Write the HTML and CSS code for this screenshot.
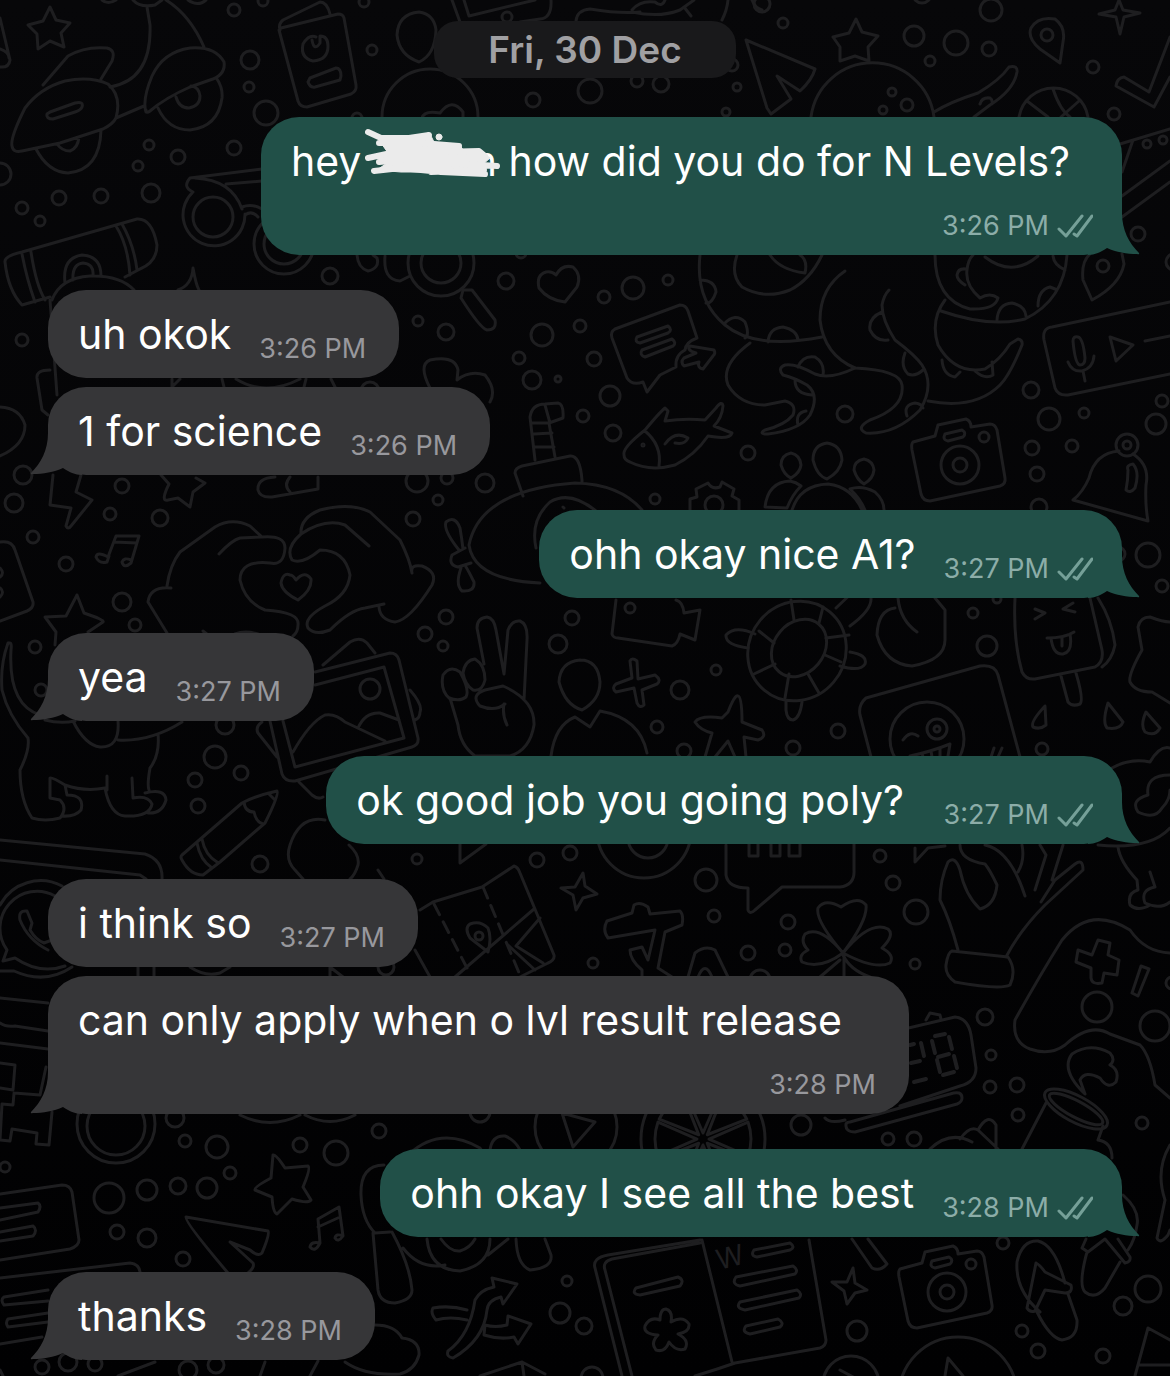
FILE: index.html
```html
<!DOCTYPE html>
<html lang="en">
<head>
<meta charset="utf-8">
<meta name="viewport" content="width=device-width, initial-scale=1">
<title>Chat</title>
<link rel="stylesheet" href="styles.css">
</head>
<body>
<svg class="wallpaper" viewBox="0 0 1170 1376" preserveAspectRatio="xMidYMin slice" aria-hidden="true">
  <defs>
    <g id="camera"><path d="M913 442L935 436L938 425L966 419Q971 421 971 427L990 424Q995 424 997 430L1005 478Q1006 484 1000 486L930 501Q923 501 921 494L912 450Q911 444 913 442ZM945 434L962 430Q967 433 963 437L948 441Q942 440 945 434Z"/><circle cx="960" cy="465" r="19"/><circle cx="960" cy="465" r="7"/><circle cx="984" cy="437" r="5"/></g>
    <path id="wedge" d="M709 1139L748 1122Q754 1139 748 1156Z"/>
  </defs>
  <!-- bubbles scattered between the doodles -->
  <g>
    <circle cx="234" cy="10" r="6"/><circle cx="263" cy="1" r="5"/><circle cx="250" cy="60" r="9"/><circle cx="249" cy="87" r="5"/><circle cx="266" cy="113" r="12"/><circle cx="149" cy="145" r="5"/><circle cx="178" cy="157" r="7"/><circle cx="138" cy="166" r="5"/><circle cx="234" cy="148" r="7"/><circle cx="59" cy="198" r="7"/><circle cx="101" cy="196" r="7"/><circle cx="151" cy="193" r="9"/><circle cx="22" cy="208" r="6"/><circle cx="40" cy="221" r="5"/><circle cx="0" cy="174" r="11"/><circle cx="372" cy="50" r="5"/><circle cx="364" cy="2" r="5"/><circle cx="330" cy="276" r="8"/><circle cx="357" cy="118" r="5"/>
    <circle cx="507" cy="17" r="5"/><circle cx="533" cy="100" r="7"/><circle cx="590" cy="91" r="12"/><circle cx="637" cy="81" r="6"/><circle cx="661" cy="84" r="8"/><circle cx="737" cy="87" r="4"/><circle cx="726" cy="112" r="4"/><circle cx="732" cy="65" r="6"/><circle cx="506" cy="281" r="8"/><circle cx="633" cy="288" r="11"/><circle cx="668" cy="280" r="5"/><circle cx="604" cy="297" r="6"/><circle cx="521" cy="253" r="5"/>
    <circle cx="762" cy="4" r="8"/><circle cx="783" cy="23" r="5"/><circle cx="922" cy="-6" r="9"/><circle cx="991" cy="10" r="11"/><circle cx="914" cy="36" r="10"/><circle cx="930" cy="61" r="5"/><circle cx="956" cy="43" r="12"/><circle cx="989" cy="49" r="7"/><circle cx="1047" cy="35" r="6"/><circle cx="1093" cy="67" r="6"/><circle cx="1114" cy="114" r="6"/><circle cx="892" cy="92" r="4"/><circle cx="907" cy="105" r="6"/><circle cx="883" cy="110" r="4"/><circle cx="1147" cy="144" r="4"/><circle cx="1163" cy="140" r="4"/><circle cx="1138" cy="234" r="7"/><circle cx="1103" cy="266" r="6"/><circle cx="1174" cy="262" r="8"/>
    <circle cx="1031" cy="390" r="8"/><circle cx="1049" cy="419" r="11"/><circle cx="1084" cy="413" r="5"/><circle cx="1162" cy="401" r="6"/><circle cx="1156" cy="424" r="10"/><circle cx="1032" cy="448" r="7"/><circle cx="1072" cy="446" r="6"/><circle cx="1037" cy="474" r="7"/><circle cx="1039" cy="507" r="8"/><circle cx="1127" cy="445" r="11"/><circle cx="1127" cy="445" r="4"/><circle cx="1148" cy="555" r="12"/><circle cx="1162" cy="586" r="6"/><circle cx="845" cy="414" r="8"/><circle cx="1118" cy="554" r="7"/>
    <circle cx="542" cy="335" r="11"/><circle cx="580" cy="326" r="6"/><circle cx="519" cy="358" r="6"/><circle cx="594" cy="359" r="7"/><circle cx="532" cy="380" r="9"/><circle cx="558" cy="379" r="3"/><circle cx="610" cy="396" r="10"/><circle cx="583" cy="416" r="6"/><circle cx="613" cy="433" r="8"/><circle cx="748" cy="453" r="7"/><circle cx="655" cy="499" r="5"/><circle cx="485" cy="483" r="9"/><circle cx="643" cy="445" r="1"/>
    <circle cx="22" cy="340" r="6"/><circle cx="418" cy="321" r="5"/><circle cx="446" cy="332" r="8"/><circle cx="23" cy="475" r="9"/><circle cx="14" cy="503" r="9"/><circle cx="122" cy="486" r="7"/><circle cx="110" cy="514" r="6"/><circle cx="33" cy="537" r="6"/><circle cx="160" cy="518" r="8"/><circle cx="66" cy="564" r="7"/><circle cx="122" cy="602" r="9"/><circle cx="135" cy="625" r="6"/><circle cx="417" cy="481" r="11"/><circle cx="447" cy="478" r="6"/><circle cx="438" cy="500" r="5"/><circle cx="413" cy="519" r="7"/><circle cx="446" cy="617" r="7"/><circle cx="425" cy="634" r="7"/><circle cx="443" cy="646" r="5"/><circle cx="35" cy="647" r="6"/><circle cx="41" cy="690" r="6"/><circle cx="370" cy="391" r="9"/><circle cx="225" cy="725" r="9"/><circle cx="215" cy="757" r="11"/><circle cx="241" cy="773" r="7"/><circle cx="195" cy="780" r="7"/><circle cx="198" cy="806" r="7"/><circle cx="260" cy="864" r="8"/>
    <circle cx="572" cy="618" r="7"/><circle cx="558" cy="644" r="9"/><circle cx="630" cy="608" r="5"/><circle cx="716" cy="670" r="5"/><circle cx="680" cy="690" r="9"/><circle cx="657" cy="727" r="6"/><circle cx="684" cy="751" r="7"/><circle cx="793" cy="748" r="7"/><circle cx="838" cy="731" r="7"/><circle cx="987" cy="646" r="10"/><circle cx="973" cy="613" r="5"/><circle cx="997" cy="599" r="4"/><circle cx="1042" cy="749" r="6"/>
    <circle cx="417" cy="859" r="5"/><circle cx="537" cy="860" r="7"/><circle cx="570" cy="853" r="7"/><circle cx="706" cy="880" r="11"/><circle cx="880" cy="856" r="6"/><circle cx="893" cy="883" r="7"/><circle cx="714" cy="916" r="6"/><circle cx="788" cy="922" r="7"/><circle cx="748" cy="953" r="7"/><circle cx="785" cy="950" r="6"/><circle cx="916" cy="912" r="12"/><circle cx="915" cy="964" r="5"/><circle cx="593" cy="963" r="5"/><circle cx="760" cy="980" r="10"/><circle cx="386" cy="967" r="8"/>
    <circle cx="175" cy="1118" r="9"/><circle cx="185" cy="1141" r="6"/><circle cx="217" cy="1147" r="11"/><circle cx="300" cy="1145" r="7"/><circle cx="336" cy="1153" r="12"/><circle cx="379" cy="1131" r="7"/><circle cx="230" cy="1173" r="6"/><circle cx="109" cy="1198" r="15"/><circle cx="147" cy="1190" r="10"/><circle cx="178" cy="1186" r="8"/><circle cx="207" cy="1188" r="10"/><circle cx="117" cy="1232" r="7"/><circle cx="147" cy="1238" r="9"/><circle cx="183" cy="1259" r="7"/><circle cx="5" cy="1167" r="5"/><circle cx="42" cy="1367" r="7"/><circle cx="68" cy="1362" r="9"/><circle cx="95" cy="1364" r="7"/><circle cx="188" cy="1370" r="9"/><circle cx="216" cy="1365" r="8"/><circle cx="480" cy="1112" r="10"/><circle cx="567" cy="1281" r="5"/><circle cx="560" cy="1313" r="10"/><circle cx="584" cy="1326" r="8"/>
    <circle cx="801" cy="1125" r="10"/><circle cx="888" cy="1139" r="6"/><circle cx="914" cy="1139" r="7"/><circle cx="985" cy="1017" r="8"/><circle cx="991" cy="1055" r="5"/><circle cx="990" cy="1087" r="6"/><circle cx="1017" cy="1085" r="7"/><circle cx="1018" cy="1115" r="6"/><circle cx="1142" cy="1123" r="6"/><circle cx="1097" cy="1007" r="15"/><circle cx="1155" cy="1026" r="15"/><circle cx="1172" cy="983" r="6"/><circle cx="1003" cy="1243" r="6"/><circle cx="857" cy="1331" r="10"/><circle cx="1022" cy="1331" r="6"/><circle cx="1038" cy="1351" r="7"/><circle cx="1123" cy="1306" r="9"/><circle cx="1148" cy="1289" r="13"/><circle cx="1103" cy="1356" r="7"/><circle cx="958" cy="1396" r="59"/><circle cx="851" cy="1384" r="28"/><circle cx="592" cy="1378" r="11"/>
  </g>
  <!-- top band: star, scooter, passport, sunglasses, torch -->
  <path d="M50 7L56 20L70 23L61 33L64 47L50 41L38 49L37 34L28 25L43 21ZM0 18L10 60Q9 68 0 67M0 49Q9 52 9 58"/>
  <path d="M43 85L68 56Q85 46 107 48Q116 50 112 61L101 79M12 146Q10 138 25 108Q40 88 65 81Q90 76 108 84Q122 96 116 118Q113 124 103 129L60 143L22 151Q13 153 12 146M50 112L75 103Q84 101 82 107Q81 110 75 112L53 119Q46 119 47 114ZM36 149Q48 172 68 173Q100 170 101 130M57 144Q62 151 70 151Q78 148 79 137M146 112Q142 100 152 76Q163 52 190 48Q215 46 224 62Q226 75 210 80L190 87Q165 98 150 111Q146 114 146 110M158 108Q168 130 190 130Q218 127 222 98Q223 88 217 79M176 97Q179 108 189 108Q200 106 200 96Q199 87 191 86M116 118L144 106M110 87Q152 80 150 25L147 7M166 0Q190 15 204 47M133 0Q140 8 155 5L162 0M102 0Q108 5 116 0M188 0Q198 7 206 0"/>
  <path d="M280 30Q278 24 283 20L320 2Q327 2 330 14M281 28L338 14Q343 14 344 18L356 85Q357 91 351 94L307 107Q300 107 298 101L279 30M316 37Q309 34 303 44Q300 58 313 61Q328 60 328 46Q328 36 320 36L320 43Q314 52 312 40M310 78L336 68Q341 68 341 76L340 80L315 87Q310 88 308 82Z"/>
  <circle cx="213" cy="217" r="20"/><circle cx="284" cy="244" r="30"/><circle cx="284" cy="244" r="20"/>
  <path d="M193 192Q182 187 190 178L262 169M195 178Q232 180 242 209M226 184L262 181M193 192A31 31 0 1 0 245 214M242 207Q252 203 262 209M245 215Q252 210 258 217"/>
  <path d="M5 262Q4 256 22 252L137 219Q152 218 157 245Q157 262 140 269L125 277M5 262Q8 290 22 305L50 297M22 254Q27 280 35 302M31 252Q36 285 45 300M116 226Q128 245 130 275M122 224Q134 245 137 270M65 283Q62 258 82 255Q101 256 101 276M73 280Q72 264 83 263Q94 264 93 275M52 300Q60 278 90 276Q120 275 134 290M178 290Q192 285 193 268Q196 285 199 290"/>
  <path d="M357 255Q358 268 368 271Q380 268 377 258L373 255M385 256Q383 280 400 281L410 276M463 290L472 290L495 320Q497 330 487 330Q480 328 461 298Z"/>
  <circle cx="441" cy="263" r="33"/><circle cx="441" cy="263" r="20"/>
  <path d="M419 12Q398 14 397 35Q399 55 419 62Q435 55 436 30Q434 14 419 12ZM382 117A48 48 0 0 1 478 117M422 118Q424 110 440 113Q452 97 463 112V120M452 0L460 22M464 0L469 16L535 0M551 0Q552 18 540 19L520 22M576 21Q577 10 590 9Q620 14 640 12M632 10Q640 0 655 2Q662 8 665 0M632 12Q660 18 680 10L694 0M684 7L691 16M728 0Q727 10 722 20M752 0Q755 8 762 10"/>
  <path d="M556 275Q562 264 573 267Q582 275 577 287L565 302Q548 300 539 288Q536 275 546 272Q552 271 556 275Z"/>
  <path d="M856 19L862 32L878 36L868 47L869 61L855 56L840 61L840 47L833 37L849 33ZM1060 63L1040 49Q1027 38 1031 28Q1038 16 1055 19Q1066 27 1063 42ZM1119 0L1123 10L1140 13L1124 17L1120 34L1116 17L1099 14L1115 10ZM1170 37L1149 92L1124 77Q1117 78 1116 86L1154 107L1170 77M746 40L815 69Q812 80 800 91L777 76L791 99L771 114L767 108Z"/>
  <path d="M811 117A62 62 0 0 1 934 117M934 112Q950 102 978 93Q1000 80 1009 67Q1018 65 1017 72Q1014 90 990 105L974 117M980 104Q982 97 990 98Q993 100 992 104M1019 117A35 35 0 0 1 1088 117M1027 101L1048 117M1053 89Q1060 110 1070 117M1079 101L1061 117M1120 144L1170 129M1122 196L1170 161M1122 217L1170 182M1133 140L1122 172"/>
  <!-- dinosaurs, voice note, camera, bell -->
  <path d="M1090 254Q1081 262 1083 280L1092 300Q1120 285 1124 264L1122 254M845 271Q820 288 820 320Q824 355 855 368Q900 370 902 385Q905 408 870 420Q855 428 866 433Q895 435 920 410Q935 385 922 365Q915 355 895 340Q882 320 882 305Q884 295 889 290M882 312Q868 318 870 330Q876 342 888 340M905 353Q900 366 908 374Q915 377 923 370M907 416Q903 405 915 403Q922 404 923 408M935 255Q935 300 970 309Q995 310 998 298Q990 292 980 298Q965 285 967 270Q968 260 973 255M965 285Q957 280 957 275Q958 268 966 269M985 257Q1012 278 1038 256M1067 255Q1064 300 1025 319Q990 328 941 311M997 320Q998 304 1012 303Q1025 306 1026 316M1038 306Q1038 290 1050 287L1055 289M1053 256Q1054 265 1065 270M945 300Q930 320 938 345Q955 375 985 369Q1000 360 1010 344L1018 339Q1023 340 1022 345Q1010 375 1000 385Q975 410 928 401M942 360Q943 375 955 377L960 372M975 371Q985 380 993 375L992 362"/>
  <path d="M1170 302L1052 327Q1042 328 1044 340L1055 388Q1058 396 1068 395L1170 374M1073 341Q1073 336 1078 337Q1083 338 1085 358Q1085 365 1080 365Q1075 364 1073 341M1068 362Q1072 372 1082 371Q1093 368 1094 356M1083 371L1085 381M1110 337L1133 345L1116 361ZM1145 341L1170 336M1119 451Q1095 453 1089 478Q1083 492 1073 500L1148 521Q1145 505 1146 485Q1150 465 1133 454M1128 470Q1126 465 1133 464Q1140 472 1135 488Q1130 494 1126 490Q1128 480 1128 470"/>
  <use href="#camera"/>
  <path d="M827 443Q813 445 813 460Q817 476 827 479Q840 472 842 460Q841 445 827 443ZM791 453Q781 455 781 465Q784 475 791 478Q800 473 801 465Q800 455 791 453ZM864 459Q854 461 854 470Q857 480 864 484Q873 479 874 470Q873 461 864 459ZM792 510Q800 485 828 484Q852 487 862 510M765 507Q768 482 790 481Q796 482 801 486Q792 495 787 508ZM850 489Q862 485 875 492Q884 500 884 510M850 489Q860 498 865 510"/>
  <path d="M615 329L680 305Q686 305 688 311L697 338Q686 342 685 350Q675 355 676 367L660 375L647 392L643 382Q632 386 627 378L612 338Q610 332 615 329ZM637 337L668 326Q673 330 668 333L640 343Q634 342 637 337ZM642 350L672 339Q677 343 673 346L645 357Q639 355 642 350ZM690 346L714 350Q716 353 713 356L703 369Q697 368 699 362L684 366Q680 362 684 358L696 353Q686 350 690 346Z"/>
  <path d="M624 455Q622 448 645 430Q660 412 665 408L668 411L665 421Q685 418 705 420L716 408Q722 400 723 406Q722 418 714 426L732 433Q730 440 708 436Q695 455 675 465Q650 472 630 462Q624 460 624 455M645 431Q662 445 659 466M665 444Q675 430 688 438Q685 445 675 443"/>
  <path d="M535 460L530 417Q532 404 545 404L558 403Q564 404 563 418L549 423L555 457M545 405L550 423L532 423M534 434L552 433M535 447L554 447M523 496L515 473Q515 468 522 466L570 456Q580 455 582 480V483M642 510Q620 484 575 483Q480 490 469 545Q474 580 540 583M596 511Q570 490 550 502Q530 520 536 548M465 548L452 555Q448 565 458 567L471 563M459 550Q443 530 446 522Q455 515 460 528Q462 540 463 549M461 568Q455 585 462 591Q475 592 474 582Q468 570 466 567M563 507L564 508M690 510V499L697 497L696 489L708 483Q712 490 720 487L722 482L734 489L732 496L739 500V510"/>
  <circle cx="714" cy="505" r="9"/>
  <path d="M700 255Q695 300 725 325Q755 350 822 337M737 255Q730 275 742 287Q765 300 790 290Q810 280 822 255M770 255Q780 270 805 273Q808 260 800 255M700 280Q715 280 716 292Q712 304 706 303M724 324Q735 312 745 322Q750 335 745 338M768 342Q769 328 783 327Q797 330 798 340M750 343Q720 365 728 385Q740 405 765 405L785 401Q797 404 793 415Q785 425 765 430Q758 434 768 434Q800 430 810 415Q820 395 807 385Q795 378 783 375Q777 368 785 365Q795 363 815 374Q830 380 855 368M798 367Q803 355 815 357Q825 363 823 375M795 380Q795 394 812 395M798 425Q795 413 806 411"/>
  <path d="M430 388Q418 365 430 360Q455 355 458 370L457 380Q470 370 485 375Q497 390 490 402M172 379V387L180 379M222 379L224 387M236 379Q265 397 300 379M306 379L304 387M331 379L335 387"/>
  <!-- lightning, heart hands, music, dog, photo, pencil -->
  <path d="M53 475L50 505L71 508L66 526Q68 530 71 526L92 500L76 492L81 475M161 475L169 484Q160 502 168 500L178 498L190 507L193 492L205 483L196 478M275 477Q257 478 258 490Q260 498 272 497L318 489V477M290 477Q283 485 290 492M131 560Q124 557 122 562Q124 569 131 563L139 536H116L108 557Q97 551 96 557Q99 564 107 562L109 556M114 542L137 543"/>
  <path d="M167 586Q170 565 180 552L215 527Q232 517 250 526L262 537Q285 535 285 548Q284 566 270 563Q240 560 240 580Q245 602 265 610Q300 612 298 625Q298 632 293 636M262 537L240 538Q232 540 219 554M171 588Q150 586 148 602L167 633M203 631L208 635M235 634Q245 630 258 634M301 534Q300 518 320 510Q350 502 370 512L400 540Q410 560 412 573M301 534Q285 548 292 560Q302 565 320 550Q345 550 350 575Q348 595 325 606Q303 618 308 628Q315 636 330 630Q350 610 365 608L384 604M301 534Q325 518 345 525L369 546M412 573Q410 564 422 566Q438 572 432 585Q410 620 395 622Q380 620 379 607M296 580Q305 570 311 579Q312 590 298 600Q282 592 281 583Q283 572 290 575Q293 575 296 580Z"/>
  <path d="M0 542Q12 540 15 550L33 602Q34 608 27 611L0 621M0 568Q5 573 0 577M0 588Q5 592 0 597M77 595L84 613Q105 620 103 622L88 632M77 595L66 616L45 617L56 632L55 645M0 407Q20 408 25 425Q25 445 0 456M50 370Q36 370 37 378L42 410L48 415M50 300L57 395"/>
  <path d="M8 643Q0 665 2 690Q8 715 28 738Q30 750 20 770Q20 800 32 818Q45 822 60 818Q68 808 60 800L50 798V778Q52 777 65 785L67 795Q85 795 81 810Q75 817 62 816M9 643Q12 642 11 650Q8 705 40 715M65 785Q85 792 105 788Q110 815 125 816Q150 817 152 804Q148 795 133 798L132 778M145 793Q165 788 166 800Q162 814 148 813M158 734Q160 755 150 768Q147 785 149 790M107 776V790M73 721Q85 745 100 747Q120 748 118 721M118 740Q150 742 182 722M45 720Q60 724 75 721"/>
  <path d="M315 672L390 653Q397 653 399 660L418 738Q419 745 412 747L295 781Q285 782 282 774L270 721M315 685L384 667L404 738L295 767L283 721M293 752Q310 722 325 715Q335 713 345 722L385 741M358 728Q365 712 380 713L399 720M323 665L350 642Q360 636 367 643L375 653M410 690Q423 705 420 712Q420 718 415 720M262 722Q255 727 258 733L277 757M299 782L312 795Q318 800 323 797M182 855L242 803Q255 796 277 791Q280 793 265 823L220 862L203 875Q190 875 182 860Q180 857 182 855M244 802Q245 812 254 812Q256 822 263 824M268 793L274 799M202 839Q205 855 217 862M197 843Q200 860 212 868M325 820Q300 815 290 845Q285 860 295 870L303 879M349 845Q360 855 358 865Q355 875 350 879M378 870L384 879"/>
  <circle cx="370" cy="689" r="10"/>
  <!-- peace hand, video, turtle, dice, ice lolly -->
  <path d="M484 664L477 628Q477 618 487 617Q494 618 496 630L504 674L508 630Q512 620 520 621Q528 624 527 640L524 700M449 698Q440 690 443 675Q450 665 460 672Q470 690 466 697Q460 702 449 698M463 673Q465 660 475 659Q485 665 485 680Q482 692 473 690Q465 685 463 673M505 704Q495 712 480 706Q470 695 485 690L503 686Q535 700 534 725Q530 750 510 756H475Q460 745 458 725L450 698M504 704Q502 715 507 725M580 660Q560 662 559 682Q565 705 582 710Q600 700 600 682Q598 660 580 660M551 756Q555 725 575 717L590 727L600 711Q640 718 647 753M630 661Q632 657 637 661L638 679L655 675Q662 680 657 684L642 690L644 705Q640 709 637 703L634 688L616 692Q611 688 616 684L632 678ZM616 600L612 634Q613 638 618 638L672 646Q678 644 680 634L695 640L700 610L684 613Q683 602 676 600M705 757L712 733Q700 730 695 722Q700 715 722 718L728 712Q735 694 738 696Q742 696 742 722L762 730Q767 737 758 740L744 737L746 757M715 757L728 741L735 757"/>
  <ellipse cx="797" cy="651" rx="48" ry="51" transform="rotate(40 797 651)"/><ellipse cx="799" cy="648" rx="25" ry="31" transform="rotate(40 799 648)"/>
  <path d="M791 600L794 620M823 607L819 623M849 635L826 638M825 655L841 662M808 674L819 693M789 674L785 698M775 664L754 674M759 631L774 643M755 634Q735 625 726 635Q725 645 748 648M850 652Q868 655 865 664Q860 672 840 666M786 702V710Q787 720 793 720Q800 718 802 702M836 608L855 590M850 626Q872 610 871 598M895 608Q878 610 877 635Q885 664 912 666Q945 660 945 640V610L935 598M898 598Q900 620 917 632M871 757L860 715Q858 705 866 698L980 666Q995 664 998 675L1020 757M903 740Q910 730 918 736M910 756Q930 752 950 744L948 756M922 753L923 757M931 751L932 757M940 748V757M991 757L994 748M998 757L1002 748"/>
  <circle cx="927" cy="739" r="37"/><circle cx="937" cy="729" r="10"/><circle cx="937" cy="729" r="3"/>
  <path d="M1015 598Q1013 640 1022 672Q1026 680 1035 679L1095 667Q1104 662 1102 650L1090 598M1098 598Q1112 620 1115 645Q1112 660 1102 667M1061 676L1068 702Q1072 707 1080 704Q1084 700 1076 673M1035 609L1045 613L1035 619M1073 603L1063 609L1075 612M1047 638Q1065 638 1074 632M1051 638Q1053 655 1063 654Q1073 652 1070 634M1062 638V646M1045 706Q1030 722 1033 727Q1040 730 1046 725ZM1108 703Q1102 722 1107 728Q1120 730 1123 722ZM1146 712Q1140 725 1145 732Q1155 737 1160 728ZM1170 622Q1163 622 1150 617Q1140 617 1138 627L1142 650Q1128 675 1130 682Q1135 692 1152 692L1170 703M1112 768Q1130 758 1150 762Q1160 745 1170 748M1170 775Q1145 775 1148 795Q1130 800 1138 812Q1155 820 1162 808Q1170 800 1170 790"/>
  <!-- app logo, map, clover, OK hand, controller -->
  <path d="M0 840L145 854Q163 860 162 879M0 860L140 875L146 879M62 886A46 46 0 0 0 0 905M55 896A37 37 0 0 0 7 950L3 961L15 958Q40 975 65 966M0 971L14 971Q45 985 72 967M52 940L44 943Q36 940 30 930L32 923L27 911Q18 910 20 920Q28 940 48 950M0 998L48 1003M0 1023Q5 1027 15 1026L48 1031M0 1043L48 1049M0 1063L15 1065L13 1090L0 1088M14 1093L40 1095L46 1067M14 1093L13 1105L2 1104L0 1140L10 1141L12 1129L37 1133L36 1144L49 1145L52 1112M138 967V977M154 967V977M190 967Q205 977 220 973L230 967M330 977V967L343 977"/>
  <circle cx="116" cy="1124" r="39"/><circle cx="116" cy="1126" r="29"/><circle cx="644" cy="831" r="47"/><circle cx="648" cy="838" r="20"/>
  <path d="M460 844V863L486 844M726 845V875Q728 888 748 888V910Q750 915 755 910L782 887H840Q855 885 854 870V844M749 844V856H758V844M771 844V856H780V844M789 844V856H800V844M420 910L433 902L482 887L514 866Q518 867 520 873L554 955Q555 960 548 963L520 977M415 950L430 977M488 952L470 938Q464 928 470 924Q480 920 488 928Q492 938 488 952ZM534 909L455 977M540 918L516 946L543 963M508 945L535 970M583 873L585 886L597 894L583 898L576 910L573 895L561 888L575 887Z"/>
  <path stroke-dasharray="12 8" d="M434 904L468 970M483 887L520 975"/>
  <circle cx="479" cy="936" r="4"/>
  <path d="M607 921L632 913L634 905Q640 901 648 907L650 914L680 911Q684 915 682 925L665 932L658 968L672 977M607 921Q602 930 608 938L655 930L648 960L642 947L630 950Q630 960 642 970V977M688 977L695 953Q705 945 715 950L728 977M698 977Q705 960 712 977M843 953Q815 920 818 908Q825 898 841 907Q858 895 866 905Q868 920 843 953Q820 925 805 934Q800 942 808 950Q798 955 802 962Q820 970 843 953Q870 920 888 929Q895 935 882 948Q895 955 890 963Q875 970 843 953M844 955V977M843 955Q850 970 870 977M840 960L820 977"/>
  <path d="M958 950Q950 920 940 900Q940 880 948 862Q955 855 960 870Q965 895 980 909Q995 905 997 885Q990 870 985 864Q960 860 960 845M1006 957Q1020 930 1045 905L1083 870Q1083 858 1075 864L1055 880L1041 902M985 845Q1010 850 1025 896M1022 845Q1025 860 1018 872M1040 845L1046 855L1035 890M1063 845L1052 880M952 951L1008 957Q1017 970 1010 985Q1000 990 955 982Q945 975 946 965Q948 952 952 951ZM915 848V862L928 848L945 846M1098 845Q1150 850 1170 828M1118 847Q1120 862 1137 880L1138 890Q1127 893 1130 905Q1138 912 1150 905M1150 872L1155 887Q1140 890 1145 903Q1160 910 1170 902"/>
  <path d="M1170 953Q1145 952 1130 930Q1090 905 1062 940Q1040 975 1015 1020Q1012 1042 1030 1049Q1050 1056 1065 1045Q1090 1022 1110 1034L1140 1045Q1150 1055 1155 1085L1170 1098M1098 940L1110 943L1108 955L1119 960L1117 975L1104 973L1102 983Q1092 985 1091 978V968L1076 962L1078 950L1092 955ZM1141 966L1149 969L1138 996L1132 993Z"/>
  <!-- clock, citrus, cup, book -->
  <path d="M900 1030L955 1017Q968 1018 971 1035L976 1068Q976 1082 960 1086L900 1106M926 1020L930 1013L940 1015L941 1019M825 1118Q830 1124 845 1120M850 1122L950 1094Q962 1090 962 1098Q962 1102 957 1104L855 1132Q845 1132 846 1124Q847 1122 850 1122M930 1149Q950 1130 972 1142M960 1139Q970 1125 978 1130L998 1149M978 1130Q988 1112 996 1125V1149M1046 1103L1022 1149M1103 1126L1098 1140Q1112 1142 1112 1158M1085 1094Q1060 1070 1072 1054Q1090 1042 1110 1053Q1116 1060 1110 1065Q1120 1070 1116 1082Q1108 1090 1100 1078Q1085 1070 1080 1080ZM562 1113L595 1122L573 1147ZM240 1115Q270 1130 300 1115M305 1115Q330 1128 355 1115"/>
  <path class="digits" d="M910 1045L914 1044M921 1043L924 1056M911 1063L920 1061M914 1082L926 1079M935 1036L945 1034M949 1037L952 1049M932 1041L935 1053M938 1057L949 1054M954 1056L957 1068M937 1060L940 1072M943 1075L954 1072"/>
  <ellipse cx="1076" cy="1109" rx="35" ry="13" transform="rotate(28 1076 1109)"/><ellipse cx="1076" cy="1109" rx="30" ry="8" transform="rotate(28 1076 1109)"/>
  <circle cx="576" cy="1127" r="41"/><circle cx="703" cy="1139" r="62"/>
  <use href="#wedge"/><use href="#wedge" transform="rotate(45 703 1139)"/><use href="#wedge" transform="rotate(90 703 1139)"/><use href="#wedge" transform="rotate(135 703 1139)"/><use href="#wedge" transform="rotate(180 703 1139)"/><use href="#wedge" transform="rotate(225 703 1139)"/><use href="#wedge" transform="rotate(270 703 1139)"/><use href="#wedge" transform="rotate(315 703 1139)"/>
  <path d="M273 1155Q276 1154 285 1168L308 1166Q311 1168 303 1187L311 1200Q308 1204 292 1199L277 1214Q273 1213 272 1197L255 1190Q254 1187 271 1178ZM228 1273Q184 1221 186 1217L268 1231Q270 1234 262 1253Q258 1257 250 1250L230 1242L253 1263Q255 1267 248 1273M320 1243L318 1219L339 1207L343 1236Q338 1243 335 1238Q336 1233 343 1236M320 1243Q311 1241 310 1247Q315 1253 320 1243M318 1227L340 1217M0 1194L62 1185Q70 1185 72 1192L79 1240Q79 1246 70 1249L0 1260M0 1208L38 1203Q42 1206 38 1212L0 1220M0 1232L33 1226Q38 1230 33 1236L0 1241M0 1278L130 1263Q139 1264 140 1272M48 1290L4 1297Q0 1300 4 1305L48 1301M48 1313L8 1319Q5 1323 8 1327L48 1322M0 1344L42 1337"/>
  <path d="M384 1165Q360 1165 361 1195Q362 1220 375 1233L390 1232M408 1155Q440 1125 480 1148L485 1155M490 1150Q492 1135 505 1136Q515 1140 520 1150M373 1233L378 1290Q380 1303 395 1303Q412 1300 412 1290Q410 1265 392 1232M403 1248Q420 1270 445 1265M427 1239Q430 1270 460 1271Q490 1265 490 1239M441 1239Q450 1252 460 1251Q470 1248 475 1239M488 1255L508 1239M516 1239Q517 1265 530 1270Q553 1268 551 1255L545 1239M467 1310Q450 1305 433 1308Q430 1313 436 1320Q450 1316 467 1320M448 1351Q470 1335 475 1300Q480 1290 494 1287L492 1278L517 1284L503 1304L501 1297Q488 1300 487 1310Q484 1340 453 1358Q446 1357 448 1351M485 1325Q495 1328 507 1325L508 1316L531 1324L518 1344L514 1337Q500 1340 484 1335ZM375 1325Q395 1325 402 1338Q420 1340 419 1355Q415 1370 400 1374Q365 1376 345 1362M118 1376L155 1362M480 1376L522 1362L545 1374M522 1362L524 1376M260 1376L265 1362M310 1376L318 1361M0 1370L3 1376"/>
  <path d="M700 1240L608 1255Q592 1258 595 1268L622 1376M700 1243L612 1259Q602 1262 605 1270L632 1376M702 1240L732 1362M809 1240L826 1340Q826 1346 820 1348L735 1363Q715 1370 695 1376M754 1250L790 1243Q796 1247 790 1250L757 1257Q750 1256 754 1250ZM736 1277L793 1266Q799 1270 795 1274L740 1286Q731 1284 736 1277ZM740 1302L797 1290Q803 1294 799 1298L745 1310Q735 1308 740 1302ZM746 1326L778 1319Q785 1323 780 1327L750 1334Q741 1332 746 1326ZM636 1288L678 1277Q685 1280 680 1286L640 1295Q631 1294 636 1288ZM660 1320Q660 1309 666 1309Q673 1311 671 1322Q683 1315 689 1324Q690 1332 678 1334Q690 1340 685 1349Q676 1352 669 1342Q665 1353 656 1350Q650 1343 658 1335Q643 1334 645 1326Q650 1316 660 1320ZM852 1239L872 1268Q880 1272 887 1264L868 1239M853 1268L855 1283L867 1290L855 1293L847 1304L844 1291L832 1282L847 1282Z"/>
  <text x="719" y="1270" transform="rotate(-14 719 1270)">W</text>
  <use href="#camera" transform="translate(-13 827)"/>
  <path d="M1040 1312Q1015 1290 1017 1262Q1022 1240 1038 1241Q1055 1245 1065 1283M1036 1263L1027 1308Q1030 1313 1035 1311L1045 1290L1065 1293Q1073 1293 1071 1285L1045 1272Q1040 1265 1036 1263M1037 1312Q1050 1338 1062 1340Q1078 1338 1077 1320L1068 1294M1086 1239L1082 1248L1088 1252L1105 1239L1125 1263Q1131 1262 1130 1257L1118 1239M1087 1252Q1078 1285 1085 1292Q1095 1300 1105 1288L1120 1262M1123 1195Q1140 1210 1137 1225Q1135 1240 1128 1250M945 1376L948 1358L963 1376M840 1370L855 1378M1170 1145Q1155 1170 1165 1200L1157 1238Q1160 1245 1168 1235L1170 1230M1135 1376L1148 1328L1170 1340M1138 1365H1170"/>
</svg>

<main class="chat">
  <h1 class="date">Fri, 30 Dec</h1>
  <ol class="messages">
    <li class="message sent">
      <p class="text">hey <span class="redacted">n<svg class="scribble" viewBox="364 128 136 52" role="img" aria-label="hidden name"><path class="solid" d="M379 141L430 136L433 142L459 145L462 150L480 151L489 158L480 166L476 172L400 172L376 170L386 163L376 158L386 152Z"/><path d="M367 132L380 138L408 138L428 135L408 140M378 143L420 143L458 146M367 158L390 153M378 162L402 160M373 171L400 168L440 172L484 174M440 152L478 151L484 156M450 163L496 166M430 172L483 170"/><circle cx="438" cy="137" r="3"/></svg></span> how did you do for N Levels?</p>
      <div class="meta"><time>3:26 PM</time><svg class="ticks" viewBox="0 0 36 25" role="img" aria-label="Delivered"><path d="M2 15L9 22L25 2M17 20L20 22L35 2"/></svg></div>
      <svg class="tail" viewBox="0 0 52 50" aria-hidden="true"><path d="M0 0H34V8C34 25 41 38 51 48Q52 50 49 49C39 49 28 47 19 43C13 47 7 50 0 50Z"/></svg>
    </li>
    <li class="message received">
      <p class="text">uh okok</p>
      <div class="meta"><time>3:26 PM</time></div>
    </li>
    <li class="message received grouped">
      <p class="text">1 for science</p>
      <div class="meta"><time>3:26 PM</time></div>
      <svg class="tail" viewBox="0 0 52 50" aria-hidden="true"><path d="M0 0H34V8C34 25 41 38 51 48Q52 50 49 49C39 49 28 47 19 43C13 47 7 50 0 50Z"/></svg>
    </li>
    <li class="message sent">
      <p class="text">ohh okay nice A1?</p>
      <div class="meta"><time>3:27 PM</time><svg class="ticks" viewBox="0 0 36 25" role="img" aria-label="Delivered"><path d="M2 15L9 22L25 2M17 20L20 22L35 2"/></svg></div>
      <svg class="tail" viewBox="0 0 52 50" aria-hidden="true"><path d="M0 0H34V8C34 25 41 38 51 48Q52 50 49 49C39 49 28 47 19 43C13 47 7 50 0 50Z"/></svg>
    </li>
    <li class="message received">
      <p class="text">yea</p>
      <div class="meta"><time>3:27 PM</time></div>
      <svg class="tail" viewBox="0 0 52 50" aria-hidden="true"><path d="M0 0H34V8C34 25 41 38 51 48Q52 50 49 49C39 49 28 47 19 43C13 47 7 50 0 50Z"/></svg>
    </li>
    <li class="message sent">
      <p class="text">ok good job you going poly?&nbsp;</p>
      <div class="meta"><time>3:27 PM</time><svg class="ticks" viewBox="0 0 36 25" role="img" aria-label="Delivered"><path d="M2 15L9 22L25 2M17 20L20 22L35 2"/></svg></div>
      <svg class="tail" viewBox="0 0 52 50" aria-hidden="true"><path d="M0 0H34V8C34 25 41 38 51 48Q52 50 49 49C39 49 28 47 19 43C13 47 7 50 0 50Z"/></svg>
    </li>
    <li class="message received">
      <p class="text">i think so</p>
      <div class="meta"><time>3:27 PM</time></div>
    </li>
    <li class="message received grouped">
      <p class="text">can only apply when o lvl result release</p>
      <div class="meta"><time>3:28 PM</time></div>
      <svg class="tail" viewBox="0 0 52 50" aria-hidden="true"><path d="M0 0H34V8C34 25 41 38 51 48Q52 50 49 49C39 49 28 47 19 43C13 47 7 50 0 50Z"/></svg>
    </li>
    <li class="message sent">
      <p class="text">ohh okay I see all the best</p>
      <div class="meta"><time>3:28 PM</time><svg class="ticks" viewBox="0 0 36 25" role="img" aria-label="Delivered"><path d="M2 15L9 22L25 2M17 20L20 22L35 2"/></svg></div>
      <svg class="tail" viewBox="0 0 52 50" aria-hidden="true"><path d="M0 0H34V8C34 25 41 38 51 48Q52 50 49 49C39 49 28 47 19 43C13 47 7 50 0 50Z"/></svg>
    </li>
    <li class="message received">
      <p class="text">thanks</p>
      <div class="meta"><time>3:28 PM</time></div>
      <svg class="tail" viewBox="0 0 52 50" aria-hidden="true"><path d="M0 0H34V8C34 25 41 38 51 48Q52 50 49 49C39 49 28 47 19 43C13 47 7 50 0 50Z"/></svg>
    </li>
  </ol>
</main>
</body>
</html>
```
FILE: styles.css
```css
* {
  box-sizing: border-box;
}

body {
  position: relative;
  min-height: 100vh;
  margin: 0;
  overflow-x: hidden;
  background: linear-gradient(#070709, #010102);
  color: #fff;
  font-family: Inter, "Liberation Sans", sans-serif;
}

.wallpaper {
  position: absolute;
  inset: 0;
  width: 100%;
  height: 100%;
  fill: none;
  stroke: #1e1e20;
  stroke-width: 3;
  stroke-linecap: round;
  stroke-linejoin: round;
}

.wallpaper .digits {
  stroke-width: 4;
}

.wallpaper text {
  fill: #1e1e20;
  stroke: none;
  font-size: 28px;
}

.chat {
  position: relative;
  display: flex;
  flex-direction: column;
  align-items: center;
  padding: 21px 48px 15px;
}

.date {
  margin: 0 0 39px;
  padding: 0 54px;
  border-radius: 24px;
  background: #19191b;
  color: #a0a0a3;
  font-size: 37px;
  font-weight: 600;
  line-height: 57px;
}

.messages {
  display: flex;
  flex-direction: column;
  align-items: flex-start;
  width: 100%;
  margin: 0;
  padding: 0;
  list-style: none;
}

.message {
  position: relative;
  isolation: isolate;
  display: flex;
  flex-wrap: wrap;
  align-items: flex-end;
  column-gap: 28px;
  max-width: 861px;
  margin-top: 35px;
  padding: 19px 33px 12px 30px;
  border-radius: 38px;
  background: #363638;
}

.message:first-child {
  margin-top: 0;
}

.message.grouped {
  margin-top: 9px;
}

.message.sent {
  align-self: flex-end;
  padding-right: 29px;
  background: #215048;
}

.text {
  margin: 0;
  padding-bottom: 7px;
  font-size: 41px;
  line-height: 50px;
}

.meta {
  display: flex;
  align-items: center;
  gap: 8px;
  height: 34px;
  margin-top: 16px;
  margin-left: auto;
  color: #98989d;
  font-size: 27px;
  line-height: 34px;
}

.sent .meta {
  color: #8cada8;
}

.ticks {
  width: 36px;
  height: 25px;
  fill: none;
  stroke: #75a098;
  stroke-width: 3;
  stroke-linecap: round;
  stroke-linejoin: round;
}

.tail {
  position: absolute;
  z-index: -1;
  right: -18px;
  bottom: 0;
  width: 52px;
  height: 50px;
  fill: #215048;
}

.received .tail {
  right: auto;
  left: -18px;
  fill: #363638;
  transform: scaleX(-1);
}

.redacted {
  position: relative;
  display: inline-block;
  width: 124px;
  text-align: right;
}

.scribble {
  position: absolute;
  top: -8px;
  left: -8px;
  width: 136px;
  height: 52px;
  fill: none;
  stroke: #ebebeb;
  stroke-width: 6;
  stroke-linecap: round;
  stroke-linejoin: round;
}

.scribble .solid,
.scribble circle {
  fill: #ebebeb;
  stroke-width: 1;
}
```
